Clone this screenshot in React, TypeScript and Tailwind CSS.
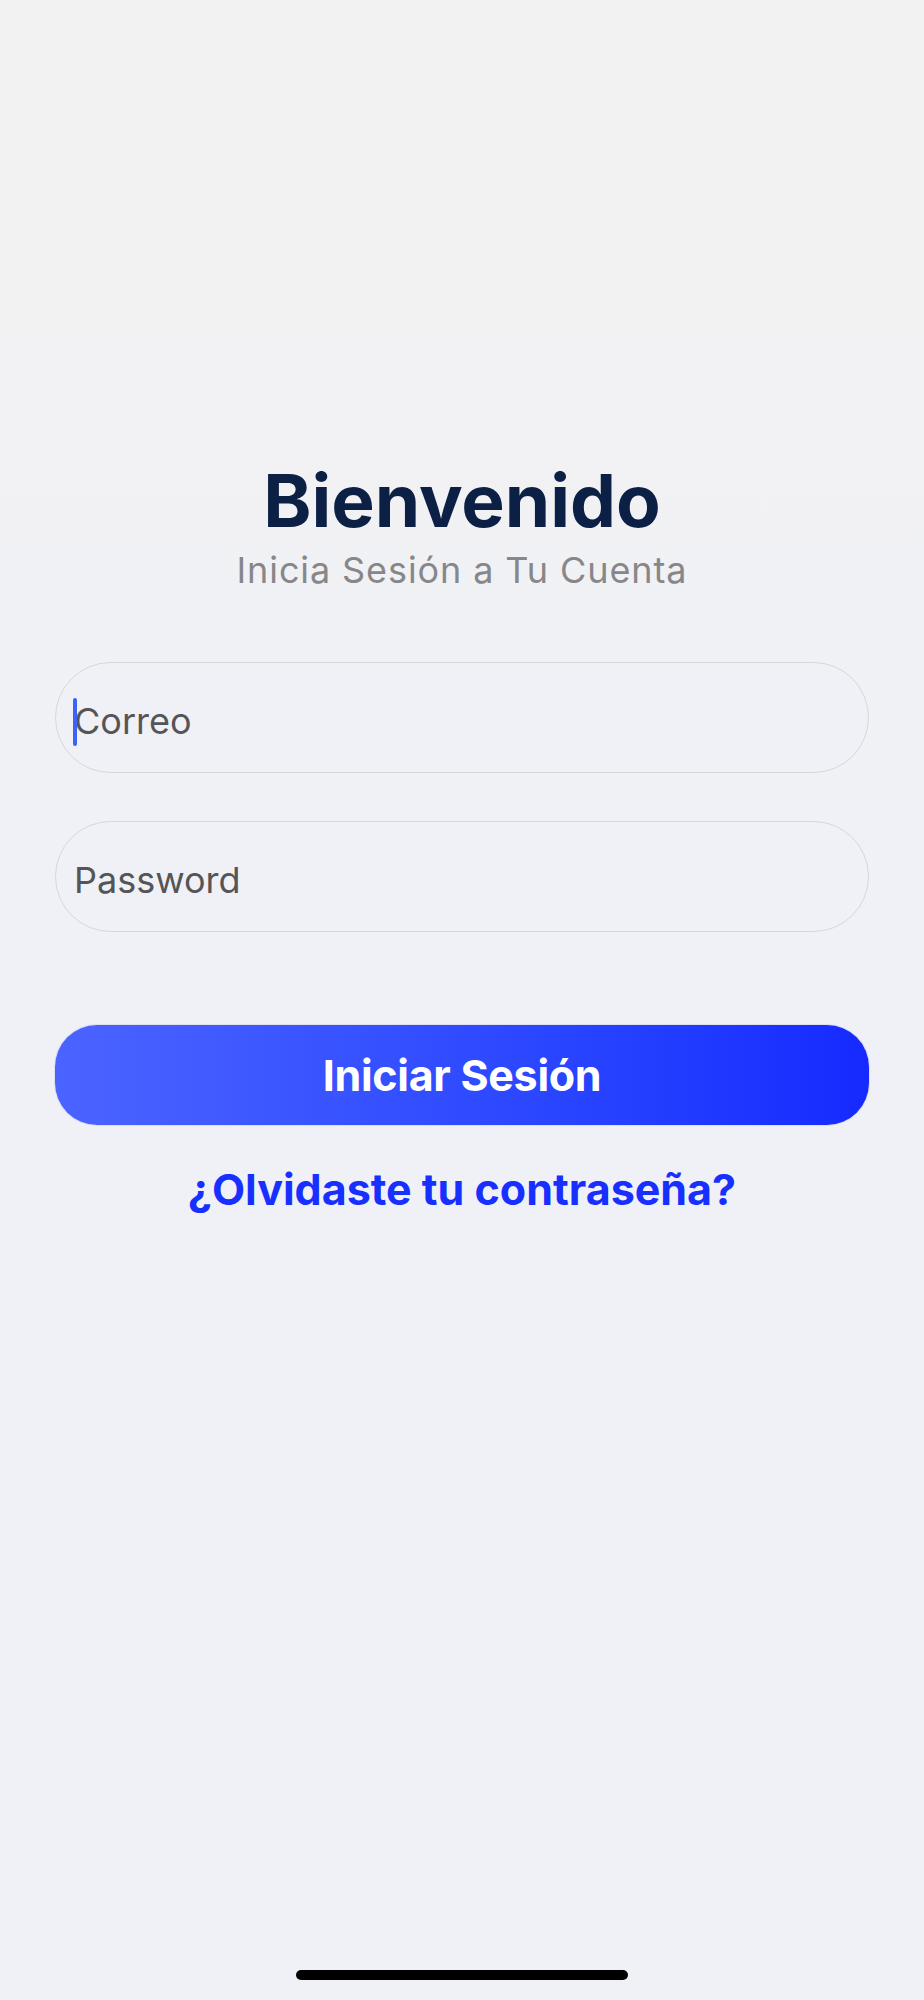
import React from 'react'

const Field = ({ label, focused }: { label: string; focused?: boolean }) => {
  return (
    <div className='relative flex items-center w-full h-[111px] rounded-full border border-[#d6d6db] bg-[#f0f1f6] pl-[18px] pt-[6px]'>
      {focused && (
        <span className='absolute left-[17px] top-[35px] h-[48px] w-[4px] rounded-full bg-[#3b63f6]'></span>
      )}
      <span className='text-[36px] leading-none text-[#555558]'>{label}</span>
    </div>
  )
}

const App = () => {
  return (
    <div
      className='flex flex-col items-center min-h-[2000px] w-full bg-gradient-to-b from-[#f2f2f2] from-10% to-[#f0f1f6] to-40% px-[55px] pt-[464px]'
      style={{ fontFamily: 'Inter, "Noto Sans", sans-serif' }}
    >
      <h1 className='text-[73px] leading-none font-bold text-[#0c1f44]'>Bienvenido</h1>
      <p className='mt-[15px] text-[36px] leading-none tracking-[0.9px] text-[#87878a]'>
        Inicia Sesión a Tu Cuenta
      </p>

      <div className='mt-[74px] flex flex-col gap-[48px] w-full'>
        <Field label='Correo' focused />
        <Field label='Password' />
      </div>

      <button className='mt-[93px] w-full h-[100px] rounded-[42px] bg-gradient-to-r from-[#4b63ff] to-[#1629ff] text-white text-[43px] leading-none font-bold tracking-[-0.3px] shadow-[0_0_0_1px_rgba(120,120,200,0.15)]'>
        Iniciar Sesión
      </button>

      <a href='#' className='mt-[43px] text-[43px] leading-none font-bold text-[#1730ff]'>
        ¿Olvidaste tu contraseña?
      </a>

      <div className='flex-1'></div>
      <div className='mb-[20px] h-[10px] w-[332px] rounded-full bg-black'></div>
    </div>
  )
}

export default App
